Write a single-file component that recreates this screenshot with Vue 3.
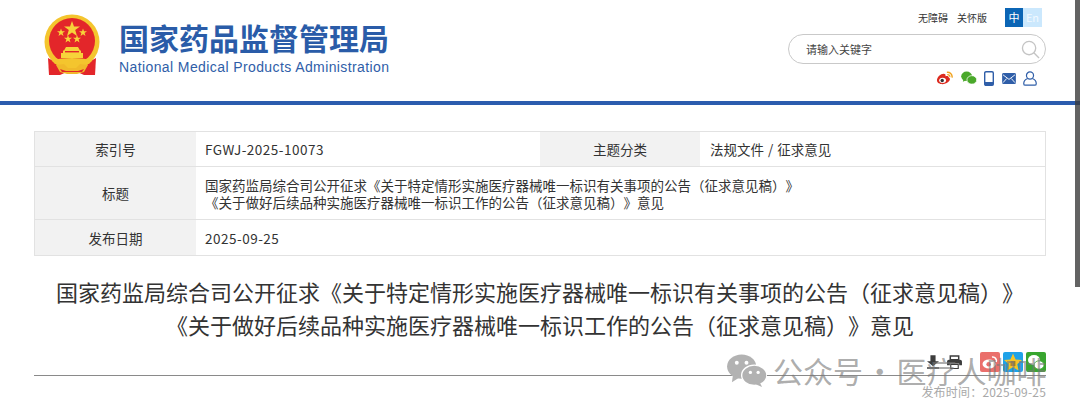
<script setup>
const rows = [
  { label: '索引号', value: 'FGWJ-2025-10073', label2: '主题分类', value2: '法规文件 / 征求意见' },
  { label: '标题', lines: ['国家药监局综合司公开征求《关于特定情形实施医疗器械唯一标识有关事项的公告（征求意见稿）》', '《关于做好后续品种实施医疗器械唯一标识工作的公告（征求意见稿）》意见'] },
  { label: '发布日期', value: '2025-09-25' }
]
</script>

<template>
  <div class="page">
    <header class="header">
      <div class="brand">
        <svg class="emblem" viewBox="0 0 56 62" width="56" height="62">
          <path d="M4 44 L15 50 L25 57 L16 61 L5 61 Z" fill="#e3262a" />
          <path d="M52 44 L41 50 L31 57 L40 61 L51 61 Z" fill="#e3262a" />
          <circle cx="28" cy="28" r="27.5" fill="#f4c52e" />
          <circle cx="28" cy="27" r="23" fill="#e3262a" />
          <polygon points="28,7 30,12.5 36,12.5 31.2,16 33,22 28,18.4 23,22 24.8,16 20,12.5 26,12.5" fill="#f7d33a" />
          <polygon points="17,14.5 18,17.3 21,17.3 18.6,19 19.5,22 17,20.2 14.5,22 15.4,19 13,17.3 16,17.3" fill="#f7d33a" />
          <polygon points="39,14.5 40,17.3 43,17.3 40.6,19 41.5,22 39,20.2 36.5,22 37.4,19 35,17.3 38,17.3" fill="#f7d33a" />
          <polygon points="24,21 25,23.8 28,23.8 25.6,25.5 26.5,28.5 24,26.7 21.5,28.5 22.4,25.5 20,23.8 23,23.8" fill="#f7d33a" />
          <polygon points="33,21 34,23.8 37,23.8 34.6,25.5 35.5,28.5 33,26.7 30.5,28.5 31.4,25.5 29,23.8 32,23.8" fill="#f7d33a" />
          <path d="M22 33 H34 L36 36.5 H37 V39 H39 V44 H17 V39 H19 V36.5 H20 Z" fill="#f7d33a" />
          <rect x="21" y="37" width="14" height="1.4" fill="#e3262a" />
          <path d="M8 46 Q28 42 48 46 L45 50 Q36 48 33 52 H23 Q20 48 11 50 Z" fill="#f4c52e" />
          <path d="M12 51 L20 50 L24 54 H32 L36 50 L44 51 L40 58 L33 60 H23 L16 58 Z" fill="#f0b92a" />
          <path d="M16 55 L22 57 H34 L40 55 L38 58 H18 Z" fill="#e3262a" />
        </svg>
        <div class="brand-text">
          <div class="cn">国家药品监督管理局</div>
          <div class="en">National Medical Products Administration</div>
        </div>
      </div>
      <div class="tools">
        <div class="toplinks">
          <span>无障碍</span>
          <span>关怀版</span>
          <div class="lang"><b>中</b><i>En</i></div>
        </div>
        <div class="search">
          <span>请输入关键字</span>
          <svg viewBox="0 0 20 20" width="19" height="19" fill="none" stroke="#c4c4c4" stroke-width="1.4">
            <circle cx="8.5" cy="8.5" r="7" />
            <path d="M13.5 13.5 L19 19" />
          </svg>
        </div>
        <div class="icons">
          <svg viewBox="0 0 18 14" width="17" height="14">
            <path d="M1 9.5 C1 6 5 2.5 8 2.5 C10 2.5 10.5 4 10 5.2 C12 4.5 13.5 5 13.5 6.5 C15 7 15 8.3 14.5 9.5 C13.3 12 10 13.6 7 13.6 C4 13.6 1 12.3 1 9.5 Z" fill="#dc2b1f" />
            <ellipse cx="7" cy="9.5" rx="3.6" ry="2.8" fill="#fff" />
            <circle cx="6.6" cy="9.6" r="1.8" fill="#333" />
            <path d="M11.5 1 C14.5 .6 17.6 3 17 6.5" fill="none" stroke="#f0a11a" stroke-width="1.5" />
            <path d="M12 3.4 C13.6 3.2 15 4.5 14.7 6" fill="none" stroke="#f0a11a" stroke-width="1.2" />
          </svg>
          <svg viewBox="0 0 17 14" width="16" height="14">
            <ellipse cx="6" cy="5.2" rx="5.8" ry="5" fill="#4aa82a" />
            <path d="M2.5 8.5 L2 11 L5 9.6 Z" fill="#4aa82a" />
            <ellipse cx="11.5" cy="9" rx="5.2" ry="4.5" fill="#4aa82a" stroke="#fff" stroke-width=".8" />
          </svg>
          <svg viewBox="0 0 10 15" width="10" height="15">
            <rect x=".7" y=".7" width="8.6" height="13.6" rx="1.3" fill="#fff" stroke="#2f5ea8" stroke-width="1.4" />
            <rect x=".7" y="11" width="8.6" height="3.3" fill="#2f5ea8" />
          </svg>
          <svg viewBox="0 0 15 12" width="14" height="11">
            <rect width="15" height="12" rx="1.5" fill="#2f5ea8" />
            <path d="M1 2 L7.5 7 L14 2 M1 10.5 L5 6 M14 10.5 L10 6" fill="none" stroke="#fff" stroke-width="1" />
          </svg>
          <svg viewBox="0 0 15 16" width="14" height="15" fill="none" stroke="#2f5ea8" stroke-width="1.3">
            <circle cx="7.5" cy="4.8" r="3.8" />
            <path d="M5 8 C2.5 9 .8 11 .8 13.5 Q.8 15.2 2.5 15.2 H12.5 Q14.2 15.2 14.2 13.5 C14.2 11 12.5 9 10 8" />
          </svg>
        </div>
      </div>
    </header>

    <main class="content">
      <div class="meta">
        <div v-for="row in rows" :key="row.label" class="row">
          <div class="label">{{ row.label }}</div>
          <div class="value" :class="{ lines: row.lines }">
            <template v-if="row.lines">
              <div v-for="line in row.lines" :key="line">{{ line }}</div>
            </template>
            <template v-else>{{ row.value }}</template>
          </div>
          <template v-if="row.label2">
            <div class="label label2">{{ row.label2 }}</div>
            <div class="value value2">{{ row.value2 }}</div>
          </template>
        </div>
      </div>

      <h1 class="title">
        国家药监局综合司公开征求《关于特定情形实施医疗器械唯一标识有关事项的公告（征求意见稿）》<br />《关于做好后续品种实施医疗器械唯一标识工作的公告（征求意见稿）》意见
      </h1>

      <div class="actions">
        <svg viewBox="0 0 14 16" width="12" height="14">
          <path d="M4 0 H10 V7 H14 L7 13 L0 7 H4 Z M0 14 H14 V16 H0 Z" fill="#3d3d3d" />
        </svg>
        <svg class="print" viewBox="0 0 16 15" width="15" height="14">
          <path d="M3.5 1 H12.5 V5 H3.5 Z" fill="none" stroke="#3d3d3d" stroke-width="1.6" />
          <path d="M2 5 H14 Q16 5 16 7 V11 H13 V9 H3 V11 H0 V7 Q0 5 2 5 Z" fill="#3d3d3d" />
          <path d="M4 10 H12 V14.4 H4 Z" fill="#fff" stroke="#3d3d3d" stroke-width="1.2" />
        </svg>
        <span class="share weibo">
          <svg viewBox="0 0 20 20" width="20" height="20">
            <ellipse cx="9" cy="12" rx="6.5" ry="4.6" fill="#fff" />
            <circle cx="8.6" cy="12.2" r="2.2" fill="#ea6f6b" />
            <path d="M12 5 C15 4.5 17 7 16.2 10" fill="none" stroke="#fff" stroke-width="1.6" />
          </svg>
        </span>
        <span class="share star">
          <svg viewBox="0 0 20 20" width="20" height="20">
            <polygon points="10,1.5 12.6,7.4 19,8 14.2,12.2 15.6,18.5 10,15.2 4.4,18.5 5.8,12.2 1,8 7.4,7.4" fill="#f7c525" />
            <rect x="7.5" y="9" width="5" height="5" fill="#b2862a" />
          </svg>
        </span>
        <span class="share wechat">
          <svg viewBox="0 0 20 20" width="20" height="20">
            <ellipse cx="8" cy="8" rx="6" ry="5" fill="#fff" />
            <ellipse cx="13" cy="13" rx="5" ry="4.2" fill="#fff" stroke="#38a52f" stroke-width=".8" />
          </svg>
        </span>
      </div>
      <div class="rule"></div>
      <div class="date">发布时间：2025-09-25</div>
    </main>

    <div class="watermark">
      <svg viewBox="0 0 42 34" width="41" height="33">
        <ellipse cx="16" cy="13" rx="15" ry="12.5" fill="#b2b2b2" />
        <path d="M7 22 L6 29 L14 24 Z" fill="#b2b2b2" />
        <ellipse cx="29" cy="22" rx="13" ry="10.5" fill="#b2b2b2" stroke="#fff" stroke-width="1.4" />
        <path d="M35 30 L37 34 L30 31 Z" fill="#b2b2b2" />
        <circle cx="11" cy="9" r="2" fill="#fff" />
        <circle cx="21" cy="9" r="2" fill="#fff" />
        <circle cx="25" cy="19" r="1.7" fill="#fff" />
        <circle cx="33" cy="19" r="1.7" fill="#fff" />
      </svg>
      <span>公众号 · 医疗人咖啡</span>
    </div>
    <div class="scrollbar"></div>
  </div>
</template>

<style>
html, body { margin: 0; background: #fff; overflow: hidden; }
</style>

<style scoped>
.page {
  position: relative;
  width: 1080px;
  height: 414px;
  overflow: hidden;
  background: #fff;
  font-family: "Noto Sans CJK SC", "Noto Sans", sans-serif;
  color: #333;
  text-spacing-trim: space-all;
}
.header {
  height: 101px;
  border-bottom: 4px solid #2b5cae;
  display: flex;
  justify-content: space-between;
  padding: 0 34px 0 44px;
}
.brand {
  display: flex;
  align-items: flex-start;
  padding-top: 14px;
}
.emblem { flex: none; }
.brand-text { margin-left: 19px; padding-top: 4px; }
.cn {
  font-size: 30px;
  font-weight: 700;
  line-height: 38px;
  color: #2a5ca8;
  white-space: nowrap;
}
.en {
  margin-top: 2px;
  font-family: "Liberation Sans", sans-serif;
  font-size: 14px;
  line-height: 18px;
  letter-spacing: .4px;
  color: #2f5ea8;
  white-space: nowrap;
}
.tools {
  width: 258px;
  display: flex;
  flex-direction: column;
  align-items: flex-end;
}
.toplinks {
  display: flex;
  align-items: center;
  margin-top: 8px;
  margin-right: 4px;
  height: 19px;
  font-size: 10px;
  color: #333;
}
.toplinks span { margin-right: 9px; line-height: 19px; white-space: nowrap; }
.lang { display: flex; margin-left: 9px; font-size: 11px; line-height: 19px; text-align: center; }
.lang b { width: 18px; background: #0b65b5; color: #fff; font-weight: 400; }
.lang i { width: 19px; background: #cbe8fd; color: #f2f9ff; font-style: normal; }
.search {
  box-sizing: border-box;
  width: 258px;
  height: 30px;
  margin-top: 7px;
  border: 1px solid #c9c9c9;
  border-radius: 15px;
  display: flex;
  align-items: center;
  justify-content: space-between;
  padding: 0 5px 0 17px;
  font-size: 11px;
  color: #444;
}
.icons {
  display: flex;
  align-items: center;
  gap: 7.5px;
  margin-top: 6px;
  margin-right: 9px;
  height: 16px;
}
.content { padding: 26px 34px 0; }
.meta {
  border: 1px solid #e2e2e2;
  width: 1012px;
  box-sizing: border-box;
}
.row {
  display: flex;
  border-bottom: 1px solid #e2e2e2;
  font-size: 13.5px;
  min-height: 34px;
}
.row:last-child { border-bottom: 0; min-height: 35px; }
.label {
  width: 161px;
  flex: none;
  background: #f2f2f2;
  display: flex;
  align-items: center;
  justify-content: center;
  font-size: 13.5px;
  color: #333;
}
.label2 { width: 160px; }
.value {
  width: 344px;
  flex: none;
  box-sizing: border-box;
  padding-left: 9px;
  display: flex;
  align-items: center;
  color: #333;
  letter-spacing: .5px;
}
.value.lines {
  width: auto;
  flex: 1;
  display: block;
  padding: 10px 0 8px 9px;
  font-size: 13.5px;
  line-height: 17px;
  letter-spacing: 0;
  white-space: nowrap;
}
.value2 { width: auto; flex: 1; padding-left: 10px; letter-spacing: 0; word-spacing: 1px; }
.title {
  margin: 19px 0 0;
  font-size: 22px;
  font-weight: 400;
  line-height: 33px;
  text-align: center;
  color: #333;
  width: 1012px;
  white-space: nowrap;
}
.actions {
  display: flex;
  align-items: center;
  justify-content: flex-end;
  gap: 3px;
  height: 20px;
  margin-top: 11px;
}
.print { margin: 0 15px 0 5px; }
.share {
  width: 20px;
  height: 20px;
  border-radius: 2px;
  display: block;
}
.share svg { display: block; }
.weibo { background: #ea6f6b; }
.star { background: #1ea2e8; }
.wechat { background: #38a52f; }
.rule { height: 1px; background: #8a8a8a; margin-top: 3px; }
.date {
  margin-top: 6px;
  text-align: right;
  font-size: 12px;
  line-height: 20px;
  color: #a8a8a8;
  letter-spacing: .2px;
}
.watermark {
  position: absolute;
  left: 726px;
  top: 353px;
  display: flex;
  align-items: center;
  gap: 6px;
  color: rgba(120, 120, 120, .62);
  font-size: 30px;
  line-height: 34px;
  word-spacing: -5px;
  white-space: nowrap;
  pointer-events: none;
}
.scrollbar {
  position: absolute;
  right: 0;
  top: 0;
  width: 5px;
  height: 287px;
  background: rgba(60, 60, 60, .8);
}
</style>
